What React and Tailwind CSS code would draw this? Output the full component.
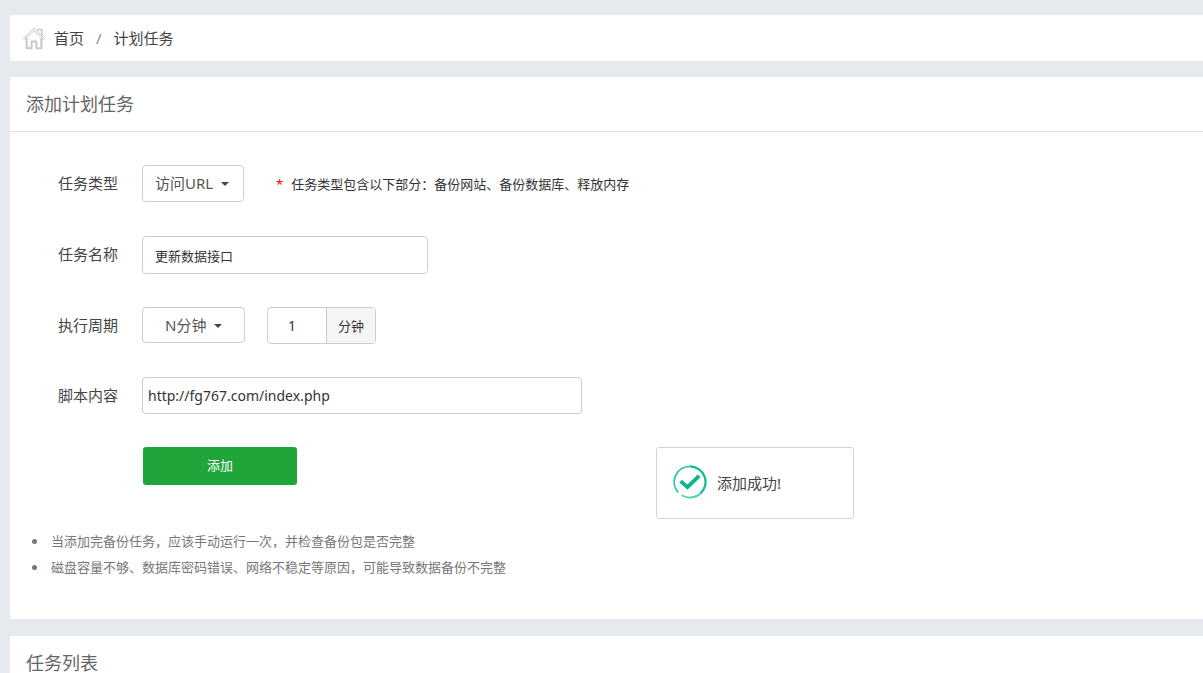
import React, { useState } from "react";

const TASK_TYPES = ["访问URL", "备份网站", "备份数据库", "释放内存"];
const PERIODS = ["N分钟", "N小时", "N天"];

const TIPS = [
  "当添加完备份任务，应该手动运行一次，并检查备份包是否完整",
  "磁盘容量不够、数据库密码错误、网络不稳定等原因，可能导致数据备份不完整",
];

const HomeIcon = () => (
  <svg
    width="24"
    height="24"
    viewBox="0 0 24 24"
    fill="none"
    stroke="#c8c8c8"
    strokeWidth="1.5"
    strokeLinejoin="round"
    strokeLinecap="round"
    aria-hidden="true"
  >
    <path d="M1.6 12.4 12 2.2l10.4 10.2-1.1 1.1L12 4.8l-9.3 8.7-1.1-1.1Z" strokeWidth="1" />
    <path d="M16 4.2V3.6h3.8v5.8" />
    <path d="M4.6 12.6v9.6h5v-6.6h4.8v6.6h5v-9.6" strokeWidth="2" />
  </svg>
);

const SuccessIcon = () => (
  <svg
    width="34"
    height="34"
    viewBox="0 0 34 34"
    fill="none"
    className="mb-0.5"
    aria-hidden="true"
  >
    <path
      d="M5.2 27.4A15.6 15.6 0 0 1 17 1.4"
      stroke="#2fc6a6"
      strokeWidth="1.8"
    />
    <path
      d="M17 1.4A15.6 15.6 0 0 1 27.6 28.4"
      stroke="#0fb995"
      strokeWidth="2.2"
    />
    <path
      d="M27.6 28.4A15.6 15.6 0 0 1 8.8 30.3"
      stroke="#4ccfb4"
      strokeWidth="1.8"
    />
    <path d="m7.6 16.2 6.8 6 11.7-11.4" stroke="#0bb491" strokeWidth="3.8" />
  </svg>
);

const Dropdown = ({ id, options, value, onChange, selectClass, caretClass }) => (
  <div className="relative">
    <select
      id={id}
      value={value}
      onChange={(e) => onChange(e.target.value)}
      className={`block appearance-none rounded border border-[#ccc] bg-white text-[15px] text-[#555] focus:outline-none ${selectClass}`}
    >
      {options.map((option) => (
        <option key={option} value={option}>
          {option}
        </option>
      ))}
    </select>
    <span
      className={`pointer-events-none absolute top-[17px] border-x-4 border-t-4 border-x-transparent border-t-[#444] ${caretClass}`}
    />
  </div>
);

const FormRow = ({ label, htmlFor, children }) => (
  <div className="flex items-start">
    <label
      htmlFor={htmlFor}
      className="w-[84px] shrink-0 text-[15px] leading-[37px] text-[#444]"
    >
      {label}
    </label>
    {children}
  </div>
);

const PanelTitle = ({ children }) => (
  <h2 className="border-b border-[#ddd] px-4 text-lg leading-[54px] text-[#666]">
    {children}
  </h2>
);

const App = () => {
  const [type, setType] = useState("访问URL");
  const [name, setName] = useState("更新数据接口");
  const [period, setPeriod] = useState("N分钟");
  const [interval, setInterval] = useState("1");
  const [script, setScript] = useState("http://fg767.com/index.php");
  const [added, setAdded] = useState(true);

  const handleSubmit = (e) => {
    e.preventDefault();
    setAdded(true);
  };

  return (
    <div className="min-h-screen bg-[#e6e9ee] pt-[15px] pl-[10px] font-['Noto_Sans','Noto_Sans_CJK_SC',sans-serif] text-[13px] text-[#333]">
      <nav className="flex h-[46px] items-center bg-white px-3 text-[15px] text-[#444]">
        <HomeIcon />
        <a href="#home" className="ml-2">
          首页
        </a>
        <span className="mx-3 text-[#888]">/</span>
        <a href="#crontab">计划任务</a>
      </nav>

      <section className="mt-4 bg-white pb-[39px]">
        <PanelTitle>添加计划任务</PanelTitle>

        <form
          onSubmit={handleSubmit}
          className="flex flex-col gap-[33px] pt-[33px] pl-12"
        >
          <FormRow label="任务类型" htmlFor="type">
            <Dropdown
              id="type"
              options={TASK_TYPES}
              value={type}
              onChange={setType}
              selectClass="h-[37px] w-[102px] pl-3"
              caretClass="right-[15px]"
            />
            <p className="ml-8 leading-[38px]">
              <span className="mr-2 text-[#f00]">*</span>
              任务类型包含以下部分：备份网站、备份数据库、释放内存
            </p>
          </FormRow>

          <FormRow label="任务名称" htmlFor="name">
            <input
              id="name"
              type="text"
              value={name}
              onChange={(e) => setName(e.target.value)}
              className="h-[38px] w-[286px] rounded border border-[#ccc] px-3 focus:outline-none"
            />
          </FormRow>

          <FormRow label="执行周期" htmlFor="period">
            <Dropdown
              id="period"
              options={PERIODS}
              value={period}
              onChange={setPeriod}
              selectClass="h-9 w-[103px] pl-[22px]"
              caretClass="right-[23px]"
            />
            <div className="ml-[22px] flex h-[37px] overflow-hidden rounded border border-[#ccc]">
              <input
                id="interval"
                type="text"
                inputMode="numeric"
                aria-label="间隔"
                value={interval}
                onChange={(e) => setInterval(e.target.value)}
                className="w-[58px] pl-5 text-sm focus:outline-none"
              />
              <label
                htmlFor="interval"
                className="w-[49px] border-l border-[#ccc] bg-[#f5f5f5] text-center leading-[36px]"
              >
                分钟
              </label>
            </div>
          </FormRow>

          <FormRow label="脚本内容" htmlFor="script">
            <input
              id="script"
              type="text"
              value={script}
              onChange={(e) => setScript(e.target.value)}
              className="h-[37px] w-[440px] rounded border border-[#ccc] px-[5px] text-sm focus:outline-none"
            />
          </FormRow>

          <button
            type="submit"
            className="ml-[85px] h-[38px] w-[154px] rounded-[3px] bg-[#20a53a] text-white"
          >
            添加
          </button>
        </form>

        <ul className="mt-[43px] list-disc pl-[38px] leading-[26px] text-[#777]">
          {TIPS.map((tip) => (
            <li key={tip} className="pl-[3px]">
              {tip}
            </li>
          ))}
        </ul>
      </section>

      <section className="mt-[17px] bg-white">
        <PanelTitle>任务列表</PanelTitle>
      </section>

      {added && (
        <div
          role="status"
          className="fixed top-[447px] left-[656px] flex h-[72px] w-[198px] items-center rounded-[3px] border border-[#d3d4d3] bg-white px-4 text-[15px] text-[#444]"
        >
          <SuccessIcon />
          <span className="ml-[10px]">添加成功!</span>
        </div>
      )}
    </div>
  );
};

export default App;
